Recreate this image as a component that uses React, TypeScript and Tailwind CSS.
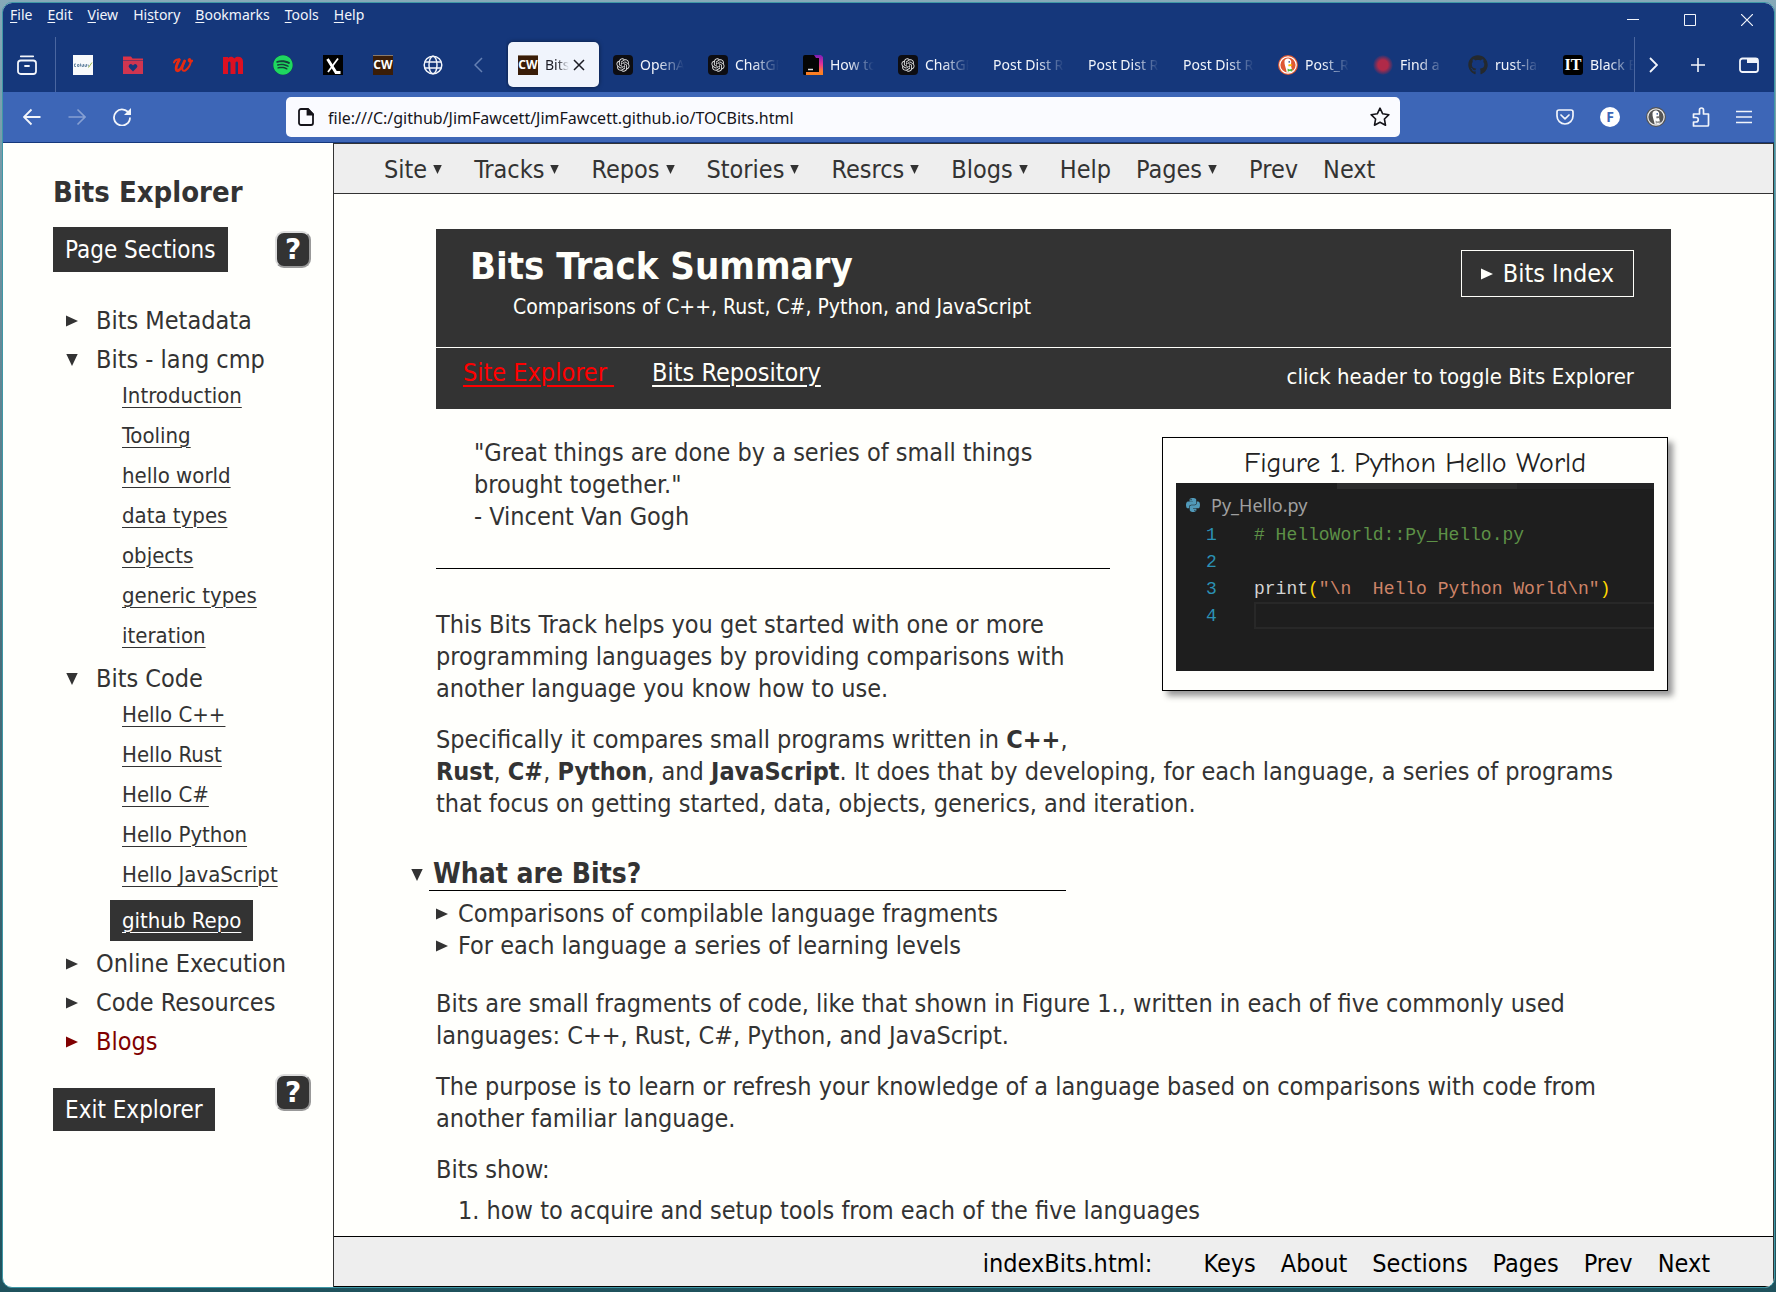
import type { ReactNode } from "react";
import { FaGithub, FaPython, FaSpotify } from "react-icons/fa";
import { RiOpenaiFill } from "react-icons/ri";

const UI_FONT = "font-['Noto_Sans',sans-serif]";
const PAGE_FONT = "font-['DejaVu_Sans_Condensed','DejaVu_Sans',sans-serif]";
const BADGE_FONT = "font-['DejaVu_Sans',sans-serif]";

function Triangle({ dir, className = "" }: { dir: "right" | "down"; className?: string }) {
  return (
    <svg viewBox="0 0 12 12" className={`shrink-0 fill-current ${className}`} aria-hidden="true">
      <path d={dir === "right" ? "M0 0.5 12 6 0 11.5Z" : "M0.3 0H11.7L6 12Z"} />
    </svg>
  );
}

/* ---------- favicons ---------- */

function DashboardIcon() {
  return (
    <svg viewBox="0 0 20 20" className="size-5">
      <rect width="20" height="20" fill="#f7f9fb" />
      <path d="M1.500 9v2.500h1.500M1.500 9h1.500M4.500 9.500h1.500v2H4.500zM7.500 8.500v3M9 9.500v2h1.500v-2.500M12 9.500v2h1.500v-2.500M15 9.500l.5 2" stroke="#6d8ba6" strokeWidth="1" fill="none" />
      <path d="M15.500 12.500 19 7.500" stroke="#9dbb4a" strokeWidth="1" />
    </svg>
  );
}

function FolderHeartIcon() {
  return (
    <svg viewBox="0 0 20 20" className="size-5">
      <path d="M0 1.500h8l1.500 2H20v2H0z" fill="#dc3347" />
      <path d="M0 6h20v13H0z" fill="#cf3550" />
      <path d="M10 16.500 6.300 12.800a2.100 2.100 0 0 1 3-3l.7.700.7-.7a2.100 2.100 0 0 1 3 3z" fill="#15377b" />
    </svg>
  );
}

function ScriptWIcon() {
  return (
    <svg viewBox="0 0 20 20" className="size-5" fill="none" stroke="#e52a12" strokeLinecap="round" strokeLinejoin="round">
      <path d="M1 7.500C1.800 5 4 4.300 6.300 4.600" strokeWidth="2" />
      <path d="M6.300 4.800C4.500 8 2.600 12.500 3.300 14.800c.7 2.200 4 .4 6-3.800l2.300-5" strokeWidth="2.800" />
      <path d="M11.600 6c-1.500 3-3 7-2 9 1.300 2.200 5-.5 7-4.500 1.400-3 1.500-5.500.4-6.300-1.200-.7-2 1-.5 2.300 1 .8 2.200.3 2.700-.8" strokeWidth="2" />
    </svg>
  );
}

function OpenAiIcon() {
  return (
    <span className="flex size-5 items-center justify-center rounded-[4px] bg-[#0d0d12] text-[#e4e4e4]">
      <RiOpenaiFill className="size-4" />
    </span>
  );
}

function CwIcon() {
  return (
    <span className="flex size-5 items-center justify-center overflow-hidden border-t border-[#8a7a6c] bg-[#3a1d08] text-xs font-bold text-white">
      CW
    </span>
  );
}

function TerminalIcon() {
  return (
    <svg viewBox="0 0 20 20" className="size-5">
      <defs>
        <linearGradient id="terminal-edge" x1="0" y1="0" x2="0" y2="1">
          <stop offset="0" stopColor="#7a1fb8" />
          <stop offset="0.450" stopColor="#e0309a" />
          <stop offset="0.800" stopColor="#ff7a30" />
          <stop offset="1" stopColor="#f9801c" />
        </linearGradient>
      </defs>
      <path d="M9 0h9l2 2v18H3v-3h13V3h-4z" fill="url(#terminal-edge)" />
      <path d="M0 2a2 2 0 0 1 2-2h9l2 3h3v14H3v3H1.500A1.500 1.500 0 0 1 0 18.500z" fill="#050505" />
      <path d="M5 14.500h5" stroke="#ddd" strokeWidth="1.500" />
    </svg>
  );
}

function DuckIcon({ ring, rim }: { ring: string; rim: string }) {
  return (
    <svg viewBox="0 0 20 20" className="size-5">
      <circle cx="10" cy="10" r="10" fill={ring} />
      <circle cx="10" cy="10" r="8.200" fill={ring} stroke={rim} strokeWidth="1.200" />
      <path d="M6.500 6c.5-2 2.300-3 4-2.400 2.200.6 3 2.400 2.700 4.200-.2 1.500-.4 3 .3 5l1 3.200c-2 1.600-4 1.700-5.800 1.200C8.300 13.500 6 9.500 6.500 6z" fill="#fff" />
      <path d="M10.300 9.600c1.500-.6 3.700-.5 4.300.1-.4 1-2.600 1.500-4.200 1.500z" fill={ring === "#de5833" ? "#fdc300" : "#777"} />
      <circle cx="11.200" cy="6.900" r=".8" fill="#2d4f8e" />
      <path d="M9.500 13.600l2 .9 2.500-.7.200 2.700-2.400-.5-2 .7z" fill={ring === "#de5833" ? "#4cba3c" : "#999"} />
    </svg>
  );
}

function GlobeIcon() {
  return (
    <svg viewBox="0 0 20 20" className="size-5" fill="none" stroke="#f2f5fb" strokeWidth="1.500">
      <circle cx="10" cy="10" r="8.800" />
      <ellipse cx="10" cy="10" rx="4" ry="8.800" />
      <path d="M1.800 7h16.400M1.800 13h16.400" />
    </svg>
  );
}

/* ---------- browser chrome ---------- */

const menus: [string, string, string][] = [
  ["", "F", "ile"],
  ["", "E", "dit"],
  ["", "V", "iew"],
  ["Hi", "s", "tory"],
  ["", "B", "ookmarks"],
  ["", "T", "ools"],
  ["", "H", "elp"],
];

function MenuBar() {
  return (
    <div className="flex h-[34px] justify-between text-[#f2f5fb]">
      <nav className="flex gap-[15px] pl-[7px] text-sm leading-6">
        {menus.map(([a, b, c]) => (
          <button key={a + b + c} className="self-start">
            {a}
            <u className="underline-offset-2">{b}</u>
            {c}
          </button>
        ))}
      </nav>
      <div className="flex items-center gap-[45px] pr-[21px]">
        <button aria-label="Minimize">
          <svg viewBox="0 0 12 12" className="size-3" stroke="currentColor">
            <path d="M0 5.500h12" />
          </svg>
        </button>
        <button aria-label="Maximize">
          <svg viewBox="0 0 12 12" className="size-3" fill="none" stroke="currentColor">
            <path d="M.5.500h11v11H.500z" />
          </svg>
        </button>
        <button aria-label="Close">
          <svg viewBox="0 0 12 12" className="size-3" stroke="currentColor" strokeWidth="1.200">
            <path d="M0 0l12 12M12 0 0 12" />
          </svg>
        </button>
      </div>
    </div>
  );
}

const pinned: [string, ReactNode][] = [
  ["Dashboard", <DashboardIcon />],
  ["Favorites", <FolderHeartIcon />],
  ["Walgreens", <ScriptWIcon />],
  [
    "Micro",
    <svg viewBox="0 0 20 20" className="size-5" fill="#dc1022">
      <path d="M0 2h5v1c.8-.8 1.800-1.200 3-1.200 1.500 0 2.500.5 3.200 1.600C12.200 2.400 13.500 1.800 15 1.800c3.200 0 5 1.700 5 5V19h-5V8.500c0-1.300-.5-1.900-1.200-1.900-.9 0-1.300.7-1.300 1.900V19h-5V8.500c0-1.300-.4-1.900-1.200-1.900S5 7.300 5 8.500V19H0z" />
    </svg>,
  ],
  [
    "Spotify",
    <span className="flex size-5 rounded-full bg-[#14403a] text-[#1ed760]">
      <FaSpotify className="size-5" />
    </span>,
  ],
  [
    "X",
    <svg viewBox="0 0 20 20" className="size-5">
      <rect width="20" height="20" fill="#000" />
      <path d="M4.500 4 13 17.500h4.500" stroke="#fff" strokeWidth="2.800" fill="none" />
      <path d="M15 3.500 5 17" stroke="#fff" strokeWidth="1.800" />
    </svg>,
  ],
  ["CW", <CwIcon />],
  ["New page", <GlobeIcon />],
];

const tabs: [string, ReactNode][] = [
  ["OpenAI", <OpenAiIcon />],
  ["ChatGPT", <OpenAiIcon />],
  ["How to", <TerminalIcon />],
  ["ChatGPT", <OpenAiIcon />],
  ["Post Dist Re", null],
  ["Post Dist Re", null],
  ["Post Dist Re", null],
  ["Post_Re", <DuckIcon ring="#de5833" rim="#ffffff" />],
  ["Find a", <span className="block size-5 rounded-full bg-[radial-gradient(circle,#b02a48_35%,#15377b_72%)]" />],
  ["rust-lang", <FaGithub className="size-5 text-[#24292e]" />],
  [
    "Black Box",
    <span className="flex size-5 items-center justify-center rounded-[3px] bg-black font-['Liberation_Serif',serif] text-base font-bold text-white">
      IT
    </span>,
  ],
];

function TabBar() {
  return (
    <div className="flex h-[55px] items-stretch text-[#f2f5fb]">
      <button aria-label="Firefox View" className="flex w-[53px] shrink-0 items-center justify-center border-r border-[#4a66a0] pr-1">
        <svg viewBox="0 0 20 20" className="size-5" fill="none" stroke="currentColor" strokeWidth="1.800" strokeLinecap="round">
          <rect x="1" y="5.500" width="18" height="13.500" rx="2.800" />
          <path d="M3.800 1.300h12.400M8 11h4" />
        </svg>
      </button>
      <div className="flex shrink-0 pl-[2px]">
        {pinned.map(([name, icon]) => (
          <button key={name} aria-label={name} className="flex w-[50px] items-center justify-center">
            {icon}
          </button>
        ))}
      </div>
      <button aria-label="Scroll tabs left" className="flex w-12 shrink-0 items-center justify-center pr-2 text-[#6580b3]">
        <svg viewBox="0 0 9 16" className="h-4 w-[9px]" fill="none" stroke="currentColor" strokeWidth="1.500">
          <path d="M8 1 1 8l7 7" />
        </svg>
      </button>
      <div role="tablist" className="flex min-w-0 flex-1 overflow-hidden border-r border-[#4a66a0] text-sm">
        <div role="tab" aria-selected="true" className="flex w-[95px] shrink-0 items-center px-[2px] py-[5px]">
          <div className="flex h-full w-full items-center rounded-[5px] bg-[#f0f4fc] pl-[10px] text-[#1c1c24] shadow-[0_0_4px_rgba(0,0,0,0.5)]">
            <CwIcon />
            <span className="ml-[7px] w-6 overflow-hidden whitespace-nowrap [mask-image:linear-gradient(to_right,black_50%,transparent)]">Bits</span>
            <button aria-label="Close tab" className="ml-1">
              <svg viewBox="0 0 12 12" className="size-3" stroke="currentColor" strokeWidth="1.500">
                <path d="M1 1l10 10M11 1 1 11" />
              </svg>
            </button>
          </div>
        </div>
        {tabs.map(([title, icon], i) => (
          <button key={i} role="tab" aria-selected="false" className="flex w-[95px] shrink-0 items-center gap-[7px] pr-3 pl-3">
            {icon && <span className="shrink-0">{icon}</span>}
            <span className="min-w-0 flex-1 overflow-hidden text-left whitespace-nowrap [mask-image:linear-gradient(to_left,transparent,black_26px)]">
              {title}
            </span>
          </button>
        ))}
      </div>
      <button aria-label="Scroll tabs right" className="flex w-[37px] shrink-0 items-center justify-center">
        <svg viewBox="0 0 9 16" className="h-4 w-[9px]" fill="none" stroke="currentColor" strokeWidth="1.800">
          <path d="M1 1l7 7-7 7" />
        </svg>
      </button>
      <button aria-label="New tab" className="flex w-[52px] shrink-0 items-center justify-center">
        <svg viewBox="0 0 16 16" className="size-4" stroke="currentColor" strokeWidth="1.600">
          <path d="M8 1v14M1 8h14" />
        </svg>
      </button>
      <button aria-label="List all tabs" className="flex w-[50px] shrink-0 items-center justify-center">
        <svg viewBox="0 0 20 16" className="h-4 w-5" fill="none" stroke="currentColor" strokeWidth="1.800">
          <rect x="1" y="1.500" width="18" height="13.500" rx="2.500" />
          <path d="M8 1h9a2 2 0 0 1 2 2v3H8z" fill="currentColor" stroke="none" />
        </svg>
      </button>
    </div>
  );
}

function Toolbar() {
  return (
    <div className="flex h-[50px] items-center bg-[#3d66b7] text-[#f2f5fb]">
      <div className="flex w-[283px] shrink-0 gap-[27px] pl-5">
        <button aria-label="Back">
          <svg viewBox="0 0 18 18" className="size-[18px]" fill="none" stroke="currentColor" strokeWidth="1.800">
            <path d="M17.500 9H1M8.500 1.500 1 9l7.500 7.500" />
          </svg>
        </button>
        <button aria-label="Forward" className="text-[#86a0d3]">
          <svg viewBox="0 0 18 18" className="size-[18px]" fill="none" stroke="currentColor" strokeWidth="1.600">
            <path d="M.5 9H17M9.500 1.500 17 9l-7.500 7.500" />
          </svg>
        </button>
        <button aria-label="Reload">
          <svg viewBox="0 0 18 18" className="size-[18px]" fill="none" stroke="currentColor" strokeWidth="1.800">
            <path d="M16.200 6A8 8 0 1 0 17 9.500" />
            <path d="M18 0v7h-7z" fill="currentColor" stroke="none" />
          </svg>
        </button>
      </div>
      <div className="flex h-10 min-w-0 flex-1 items-center rounded-[5px] bg-[#fafbff] pr-[10px] pl-3 text-[#15141a]">
        <svg viewBox="0 0 16 18" className="h-[18px] w-4 shrink-0" fill="none" stroke="currentColor" strokeWidth="1.800">
          <path d="M3 1h7l5 5v9a2 2 0 0 1-2 2H3a2 2 0 0 1-2-2V3a2 2 0 0 1 2-2z" />
          <path d="M9.500 1v5.500H15z" fill="currentColor" />
        </svg>
        <input
          type="text"
          aria-label="Address"
          defaultValue="file:///C:/github/JimFawcett/JimFawcett.github.io/TOCBits.html"
          className="ml-[14px] min-w-0 flex-1 bg-transparent pt-[2px] text-base outline-none"
        />
        <button aria-label="Bookmark this page">
          <svg viewBox="0 0 20 20" className="size-5" fill="none" stroke="currentColor" strokeWidth="1.600" strokeLinejoin="round">
            <path d="M10 1.200l2.700 5.600 6.200.9-4.500 4.300 1.100 6.200L10 15.300l-5.500 2.900 1.100-6.200L1.100 7.700l6.200-.9z" />
          </svg>
        </button>
      </div>
      <div className="flex w-[374px] shrink-0 items-center justify-end gap-[26px] pr-[22px]">
        <button aria-label="Save to Pocket">
          <svg viewBox="0 0 18 18" className="size-[18px]" fill="none" stroke="currentColor" strokeWidth="1.700" strokeLinecap="round" strokeLinejoin="round">
            <path d="M3 2h12a2 2 0 0 1 2 2v4a8 8 0 0 1-16 0V4a2 2 0 0 1 2-2z" />
            <path d="M5 7l4 3.800L13 7" />
          </svg>
        </button>
        <button aria-label="Account" className="flex size-5 items-center justify-center rounded-full bg-white text-sm font-bold text-[#3d66b7]">
          F
        </button>
        <button aria-label="Privacy extension">
          <DuckIcon ring="#555555" rim="#e8e8e8" />
        </button>
        <button aria-label="Extensions">
          <svg viewBox="0 0 18 20" className="h-5 w-[18px]" fill="none" stroke="currentColor" strokeWidth="1.700" strokeLinejoin="round">
            <path d="M1.500 19h14a1 1 0 0 0 1-1V7h-5V3a2 2 0 0 0-4 0v4H1.500v3.500H4a2 2 0 0 1 0 4.500H1.500z" />
          </svg>
        </button>
        <button aria-label="Application menu">
          <svg viewBox="0 0 16 14" className="h-[14px] w-4" stroke="currentColor" strokeWidth="1.600">
            <path d="M0 1.500h16M0 7h16M0 12.500h16" />
          </svg>
        </button>
      </div>
    </div>
  );
}

/* ---------- explorer sidebar ---------- */

function HelpButton() {
  return (
    <button
      aria-label="Help"
      className={`${BADGE_FONT} flex h-[37px] w-9 items-center justify-center rounded-[9px] border-2 border-t-[#dddddd] border-r-[#999999] border-b-[#999999] border-l-[#dddddd] bg-[#333333] text-[28px] leading-8 font-bold text-white`}
    >
      ?
    </button>
  );
}

function TreeLabel({ open, children }: { open?: boolean; children: ReactNode }) {
  return (
    <button className="flex h-8 items-center gap-[18px] text-left text-[25px] leading-8">
      <Triangle dir={open ? "down" : "right"} className="h-3 w-3" />
      {children}
    </button>
  );
}

function TreeLinks({ items }: { items: string[] }) {
  return (
    <ul className="pl-14">
      {items.map((t) => (
        <li key={t} className="h-10 text-[22px] leading-10">
          <a href="#" className="underline decoration-1 underline-offset-4">
            {t}
          </a>
        </li>
      ))}
    </ul>
  );
}

function Explorer() {
  return (
    <aside className="w-[330px] shrink-0 pt-[33px] pr-[22px] pl-[50px] text-[#333333]">
      <h1 className="text-[29px] leading-8 font-bold">Bits Explorer</h1>
      <div className="mt-[19px] flex items-center justify-between">
        <button className="h-[45px] bg-[#333333] px-3 text-2xl text-white">Page Sections</button>
        <HelpButton />
      </div>
      <ul className="mt-[33px] flex flex-col gap-[7px] pl-[13px]">
        <li>
          <TreeLabel>Bits Metadata</TreeLabel>
        </li>
        <li>
          <TreeLabel open>Bits - lang cmp</TreeLabel>
          <TreeLinks items={["Introduction", "Tooling", "hello world", "data types", "objects", "generic types", "iteration"]} />
        </li>
        <li>
          <TreeLabel open>Bits Code</TreeLabel>
          <TreeLinks items={["Hello C++", "Hello Rust", "Hello C#", "Hello Python", "Hello JavaScript"]} />
          <a
            href="#"
            className="mt-[5px] ml-11 inline-block h-[41px] bg-[#333333] px-3 align-top text-[22px] leading-[41px] text-white underline decoration-1 underline-offset-4"
          >
            github Repo
          </a>
        </li>
        <li>
          <TreeLabel>Online Execution</TreeLabel>
        </li>
        <li>
          <TreeLabel>Code Resources</TreeLabel>
        </li>
        <li className="text-[#800000]">
          <TreeLabel>Blogs</TreeLabel>
        </li>
      </ul>
      <div className="mt-4 flex items-start justify-between">
        <button className="mt-[14px] h-[43px] bg-[#333333] px-3 text-2xl text-white">Exit Explorer</button>
        <HelpButton />
      </div>
    </aside>
  );
}

/* ---------- page ---------- */

const topNav: [string, boolean][] = [
  ["Site", true],
  ["Tracks", true],
  ["Repos", true],
  ["Stories", true],
  ["Resrcs", true],
  ["Blogs", true],
  ["Help", false],
  ["Pages", true],
  ["Prev", false],
  ["Next", false],
];

function TopNav() {
  return (
    <nav className="flex h-[51px] shrink-0 items-center border-y border-[#333333] bg-[#eeeeee] pt-[2px] pl-[50px] text-[25px] text-[#333333]">
      {topNav.map(([label, menu]) => (
        <button key={label} className={menu ? "mr-8 flex items-center gap-[6px]" : "mr-[25px]"}>
          {label}
          {menu && <Triangle dir="down" className="h-[9px] w-[9px]" />}
        </button>
      ))}
    </nav>
  );
}

function TrackHeader() {
  return (
    <header className="bg-[#333333] text-[#fffffa]">
      <div className="flex h-[118px] items-start justify-between pt-[14px] pr-[37px] pl-[34px]">
        <div>
          <h1 className="text-[38px] leading-[46px] font-bold">Bits Track Summary</h1>
          <p className="pl-[43px] text-[21px] leading-9">Comparisons of C++, Rust, C#, Python, and JavaScript</p>
        </div>
        <button className="mt-[7px] flex h-[47px] items-center gap-[10px] border border-[#fffffa] px-[19px] text-[25px]">
          <Triangle dir="right" className="h-3 w-3" />
          Bits Index
        </button>
      </div>
      <div className="flex h-[62px] items-start justify-between border-t border-[#fffffa] pt-[9px] pr-[37px] pl-[27px]">
        <div className="flex gap-[38px] text-[25px] leading-8 underline-offset-4">
          <a href="#" className="whitespace-pre text-[#ff0000] underline decoration-2">
            {"Site Explorer "}
          </a>
          <a href="#" className="underline decoration-2">
            Bits Repository
          </a>
        </div>
        <span className="text-[22px] leading-10">click header to toggle Bits Explorer</span>
      </div>
    </header>
  );
}

function CodeLine({ n, children }: { n: number; children?: ReactNode }) {
  return (
    <div className="flex h-[27px] items-center">
      <span className="w-[78px] pl-[30px] text-[#2b91b5]">{n}</span>
      {children}
    </div>
  );
}

function Figure() {
  return (
    <figure className="float-right mt-7 mr-[3px] mb-10 ml-[52px] w-[506px] border border-black bg-[#fffffc] px-[13px] pb-[19px] shadow-[5px_5px_6px_#999999]">
      <figcaption className="pt-[6px] pb-px text-center font-['Comic_Neue',cursive] text-[28px] leading-[38px] text-[#222222]">
        Figure 1. Python Hello World
      </figcaption>
      <div className="h-[188px] overflow-hidden bg-[#1e1e1e]">
        <div className="flex h-[6px]">
          <div className="w-[161px]" />
          <div className="w-[180px] bg-[#2d2d2d]" />
          <div className="flex-1 bg-[#252526]" />
        </div>
        <div className="flex h-8 items-center gap-[10px] pl-[9px] font-['Noto_Sans',sans-serif] text-lg text-[#a0a0a0]">
          <FaPython className="size-4 text-[#519aba]" />
          Py_Hello.py
        </div>
        <div className="font-['Liberation_Mono',monospace] text-lg whitespace-pre">
          <CodeLine n={1}>
            <span className="text-[#5d9147]"># HelloWorld::Py_Hello.py</span>
          </CodeLine>
          <CodeLine n={2} />
          <CodeLine n={3}>
            <span className="text-[#d4d4d4]">print</span>
            <span className="text-[#ffd700]">(</span>
            <span className="text-[#ce8468]">{'"\\n  Hello Python World\\n"'}</span>
            <span className="text-[#ffd700]">)</span>
          </CodeLine>
          <CodeLine n={4}>
            <span className="h-full flex-1 border-2 border-r-0 border-[#282828]" />
          </CodeLine>
        </div>
      </div>
    </figure>
  );
}

function Article() {
  return (
    <main className="min-h-0 flex-1 overflow-hidden px-[102px] pt-[35px] text-[25px] leading-8 text-[#333333]">
      <TrackHeader />
      <Figure />
      <blockquote className="pt-7 pl-[38px]">
        "Great things are done by a series of small things
        <br />
        brought together."
        <br />- Vincent Van Gogh
      </blockquote>
      <hr className="mt-[35px] flow-root border-t border-black" />
      <p className="mt-10">
        This Bits Track helps you get started with one or more programming languages by providing comparisons with another
        language you know how to use.
      </p>
      <p className="mt-[19px] pr-4">
        Specifically it compares small programs written in <b>C++</b>, <b>Rust</b>, <b>C#</b>, <b>Python</b>, and{" "}
        <b>JavaScript</b>. It does that by developing, for each language, a series of programs that focus on getting started,
        data, objects, generics, and iteration.
      </p>
      <h2 className="mt-[38px] -ml-[25px] text-[28px] leading-8 font-bold">
        <button className="flex items-center gap-[6px] text-left">
          <Triangle dir="down" className="h-3 w-3" />
          <span className="w-[637px] border-b border-black pl-1">What are Bits?</span>
        </button>
      </h2>
      <ul className="mt-[7px]">
        {["Comparisons of compilable language fragments", "For each language a series of learning levels"].map((t) => (
          <li key={t}>
            <button className="flex items-center gap-[10px] text-left">
              <Triangle dir="right" className="h-3 w-3" />
              {t}
            </button>
          </li>
        ))}
      </ul>
      <p className="mt-[26px]">
        Bits are small fragments of code, like that shown in Figure 1., written in each of five commonly used languages: C++,
        Rust, C#, Python, and JavaScript.
      </p>
      <p className="mt-[19px]">
        The purpose is to learn or refresh your knowledge of a language based on comparisons with code from another familiar
        language.
      </p>
      <p className="mt-[19px]">Bits show:</p>
      <ol className="mt-[9px] list-inside list-decimal pl-[22px]">
        <li>how to acquire and setup tools from each of the five languages</li>
      </ol>
    </main>
  );
}

function Footer() {
  return (
    <footer className="flex h-[51px] shrink-0 items-center justify-end gap-[25px] border-y border-black bg-[#eeeeee] pt-1 pr-[63px] text-[25px] text-black">
      <span className="mr-[26px]">indexBits.html:</span>
      {["Keys", "About", "Sections", "Pages", "Prev", "Next"].map((t) => (
        <button key={t}>{t}</button>
      ))}
    </footer>
  );
}

export default function App() {
  return (
    <div className="flex h-screen flex-col bg-linear-to-b from-[#86a9b8] via-[#4a6f7c] to-[#1f525d] pt-[2px] pr-px pb-1 pl-[2px]">
      <div className="flex min-h-0 flex-1 flex-col overflow-hidden rounded-[10px] border border-[#3f98a6] bg-[#fffffc]">
        <div className={`${UI_FONT} shrink-0 border-b border-[#15377b] bg-[#15377b]`}>
          <MenuBar />
          <TabBar />
          <Toolbar />
        </div>
        <div className={`${PAGE_FONT} flex min-h-0 flex-1`}>
          <Explorer />
          <div className="flex min-w-0 flex-1 flex-col border-x border-[#333333]">
            <TopNav />
            <Article />
            <Footer />
          </div>
        </div>
      </div>
    </div>
  );
}
